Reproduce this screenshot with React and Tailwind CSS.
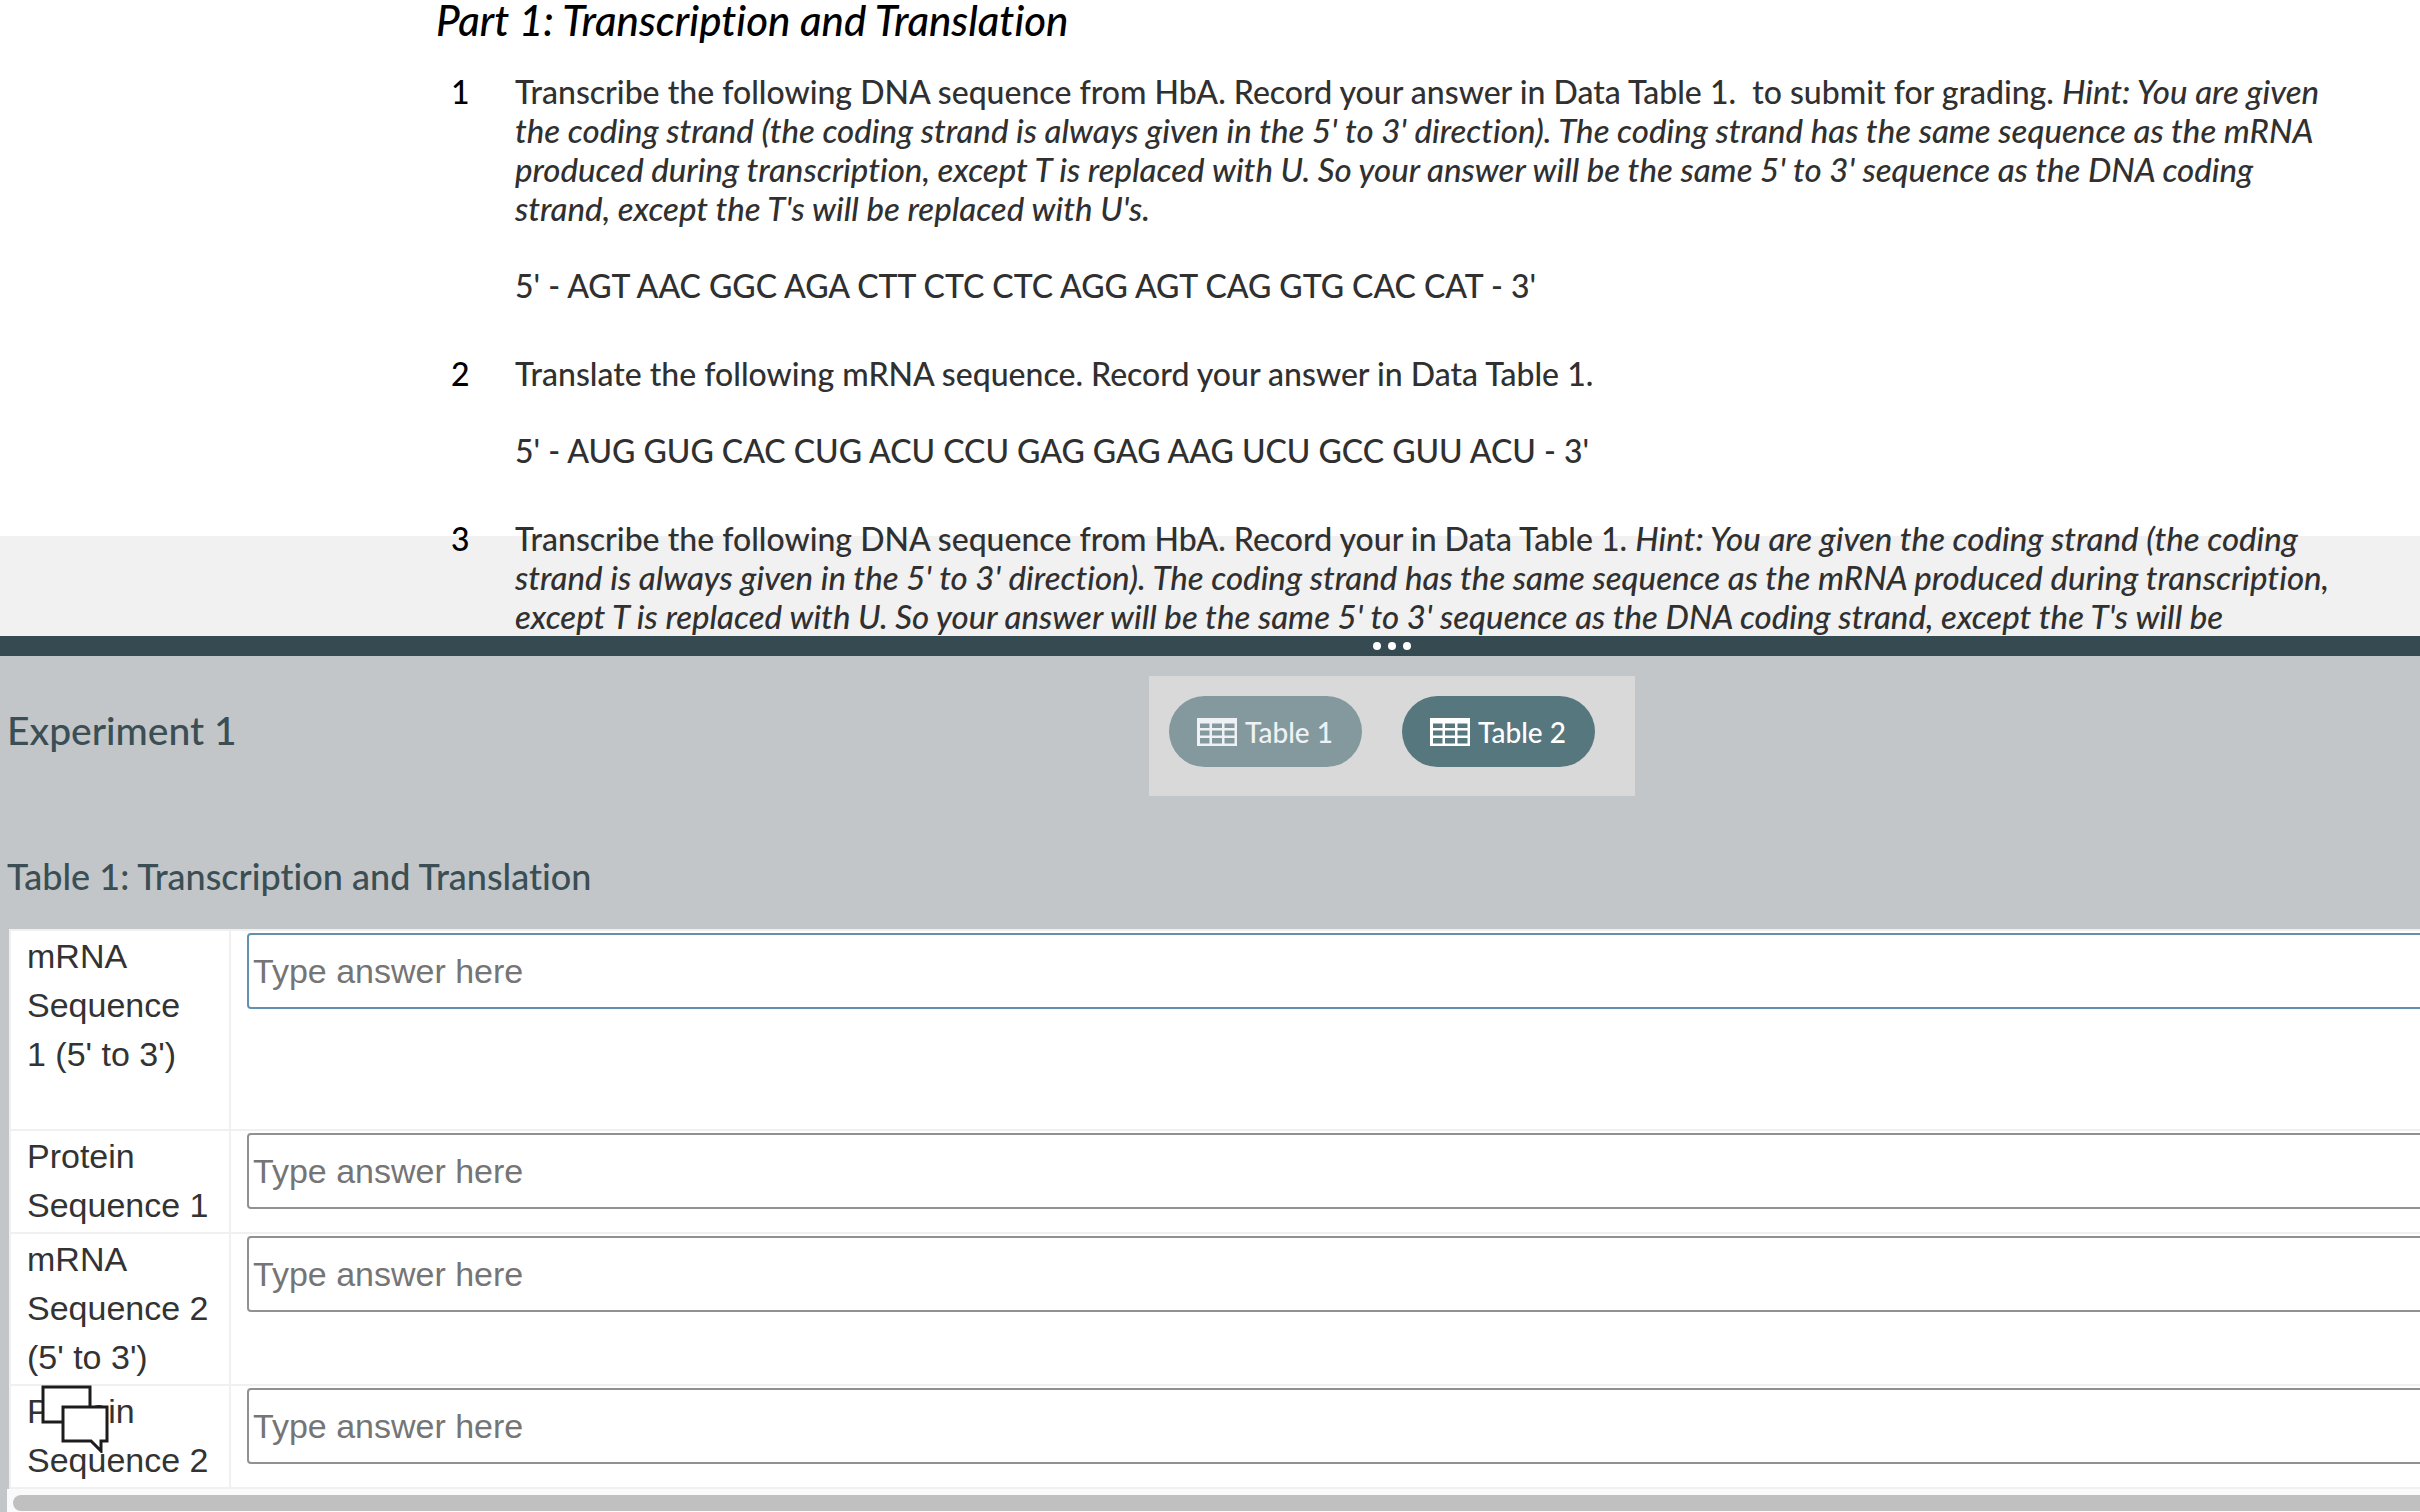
const rows = [
  { id: "mrna-1", label: ["mRNA", "Sequence", "1 (5' to 3')"], height: "h-[200px]", focused: true },
  { id: "protein-1", label: ["Protein", "Sequence 1"], height: "h-[103px]" },
  { id: "mrna-2", label: ["mRNA", "Sequence 2", "(5' to 3')"], height: "h-[152px]" },
  { id: "protein-2", label: ["Protein", "Sequence 2"], height: "h-[103px]" },
];

function Step({ number, children }) {
  return (
    <li className="flex items-start">
      <span className="w-[79px] shrink-0 pl-[15px] text-black">{number}</span>
      <div className="flex flex-col gap-[38px] whitespace-nowrap">{children}</div>
    </li>
  );
}

function Hint({ children }) {
  return <em className="text-[33px] leading-none italic">{children}</em>;
}

function TableIcon() {
  return (
    <svg viewBox="0 0 40 28" className="h-7 w-10" fill="currentColor" aria-hidden="true">
      <path
        fillRule="evenodd"
        d="M0 0H40V28H0ZM3 5.5V10H12.5V5.5ZM15 5.5V10H25V5.5ZM27.5 5.5V10H37.5V5.5ZM3 12.5V17.5H12.5V12.5ZM15 12.5V17.5H25V12.5ZM27.5 12.5V17.5H37.5V12.5ZM3 20V25.5H12.5V20ZM15 20V25.5H25V20ZM27.5 20V25.5H37.5V20Z"
      />
    </svg>
  );
}

function TabButton({ children, active }) {
  return (
    <button
      type="button"
      className={
        "flex h-[71px] w-[193px] items-center justify-center gap-2 rounded-full text-[28px] leading-8 font-medium " +
        (active ? "bg-[#84999e] text-[#eef2f4]" : "bg-[#56777d] text-white")
      }
    >
      <TableIcon />
      <span>{children}</span>
    </button>
  );
}

function ChatIcon() {
  return (
    <svg viewBox="0 0 72 70" className="h-[70px] w-[72px]" fill="#fff" stroke="#1c1c1c" strokeWidth="3" aria-hidden="true">
      <path d="M6 4H53V39H6Z" />
      <path d="M26 24H70V58H64V68L54 58H26Z" />
    </svg>
  );
}

export default function App() {
  return (
    <div className="flex h-screen flex-col overflow-hidden bg-white font-[Lato,sans-serif] font-medium [font-variant-ligatures:none]">
      <div className="flex min-h-0 w-[115%] flex-1 flex-col">
        <section className="h-[636px] shrink-0 overflow-hidden bg-[#f1f1f1]">
          <div className="h-[536px] bg-white pl-[436px]">
            <h1 className="text-[42px] leading-10 text-black italic">Part 1: Transcription and Translation</h1>
            <ol className="mt-8 flex flex-col gap-[49px] text-[32px] leading-[39px] text-[#303030]">
              <Step number="1">
                <p>
                  Transcribe the following DNA sequence from HbA. Record your answer in Data Table 1.&nbsp; to submit
                  for grading. <Hint>Hint: You are given</Hint>
                  <br />
                  <Hint>
                    the coding strand (the coding strand is always given in the 5' to 3' direction). The coding strand
                    has the same sequence as the mRNA
                    <br />
                    produced during transcription, except T is replaced with U. So your answer will be the same 5' to 3'
                    sequence as the DNA coding
                    <br />
                    strand, except the T's will be replaced with U's.
                  </Hint>
                </p>
                <p>5' - AGT AAC GGC AGA CTT CTC CTC AGG AGT CAG GTG CAC CAT - 3'</p>
              </Step>
              <Step number="2">
                <p>Translate the following mRNA sequence. Record your answer in Data Table 1.</p>
                <p>5' - AUG GUG CAC CUG ACU CCU GAG GAG AAG UCU GCC GUU ACU - 3'</p>
              </Step>
              <Step number="3">
                <p>
                  Transcribe the following DNA sequence from HbA. Record your in Data Table 1.{" "}
                  <Hint>
                    Hint: You are given the coding strand (the coding
                    <br />
                    strand is always given in the 5' to 3' direction). The coding strand has the same sequence as the
                    mRNA produced during transcription,
                    <br />
                    except T is replaced with U. So your answer will be the same 5' to 3' sequence as the DNA coding
                    strand, except the T's will be
                  </Hint>
                </p>
              </Step>
            </ol>
          </div>
        </section>

        <div className="flex h-5 shrink-0 items-center justify-center gap-[7px] bg-[#354b51]">
          <span className="size-2 rounded-full bg-white" />
          <span className="size-2 rounded-full bg-white" />
          <span className="size-2 rounded-full bg-white" />
        </div>

        <section className="flex min-h-0 flex-1 flex-col bg-[#c2c6c9] text-[#3a4e54]">
          <header className="grid grid-cols-[1fr_auto_1fr] items-start pt-5">
            <h2 className="mt-[30px] pl-[7px] text-[39px] leading-[48px]">Experiment 1</h2>
            <nav className="flex h-[120px] items-start gap-10 bg-[#d9d9d9] pt-5 pr-10 pl-5">
              <TabButton active>Table 1</TabButton>
              <TabButton>Table 2</TabButton>
            </nav>
          </header>

          <h3 className="mt-[58px] pl-[7px] text-[36px] leading-[44px]">Table 1: Transcription and Translation</h3>

          <div className="mt-[31px] ml-[7px] font-['Liberation_Sans',Arial,sans-serif] text-[34px] leading-[49px] font-normal text-[#333]">
            <table className="ml-[2px] w-full table-fixed border-separate border-spacing-0 border-t-2 border-l-2 border-[#f0f0f0] bg-white">
              <tbody>
                {rows.map((row) => (
                  <tr key={row.id} className={row.height}>
                    <th
                      scope="row"
                      className="w-[220px] border-r-2 border-b-2 border-[#f0f0f0] pl-4 text-left align-top font-normal"
                    >
                      <label htmlFor={row.id} className="block pt-px whitespace-nowrap">
                        {row.label.map((line) => (
                          <span key={line} className="block">
                            {line}
                          </span>
                        ))}
                      </label>
                    </th>
                    <td className="border-b-2 border-[#f0f0f0] pt-[2px] pl-4 align-top">
                      <input
                        id={row.id}
                        type="text"
                        placeholder="Type answer here"
                        className={
                          "block h-[76px] w-full rounded-[4px] border-2 bg-white px-1 outline-none placeholder:text-[#757575] " +
                          (row.focused ? "border-[#6290b0]" : "border-[#919191]")
                        }
                      />
                    </td>
                  </tr>
                ))}
              </tbody>
            </table>
            <div className="h-6 bg-[#fafafa] pt-[6px] pl-[6px]">
              <div className="h-4 rounded-full bg-[#c0c0c0]" />
            </div>
          </div>
        </section>
      </div>

      <button type="button" aria-label="Open chat" className="fixed bottom-[59px] left-[37px]">
        <ChatIcon />
      </button>
    </div>
  );
}
